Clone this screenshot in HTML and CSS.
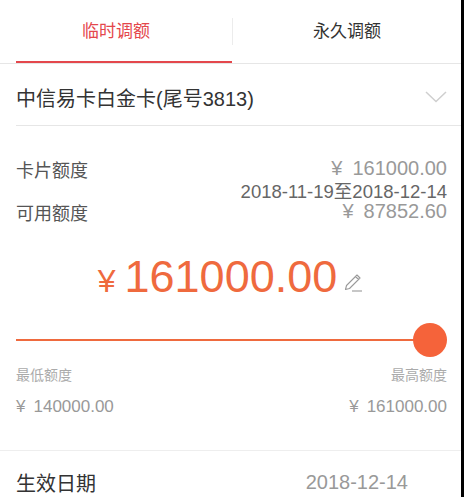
FILE: index.html
```html
<!DOCTYPE html>
<html lang="zh-CN">
<head>
    <meta charset="UTF-8">
    <meta name="viewport" content="width=device-width, initial-scale=1.0">
    <title>临时调额</title>
    <link rel="stylesheet" href="styles.css">
</head>
<body>

    <div class="page">
        <!-- Tabs -->
        <div class="tabs">
            <div class="tab active">临时调额</div>
            <div class="tab-sep"></div>
            <div class="tab">永久调额</div>
        </div>

        <!-- Card picker -->
        <div class="card-select">
            <span class="card-name">中信易卡白金卡(尾号3813)</span>
            <svg class="chevron" width="22" height="12" viewBox="0 0 22 12">
                <polyline points="1,1 11,10.5 21,1" fill="none" stroke="#cfcfcf" stroke-width="1.5"/>
            </svg>
        </div>

        <!-- Quota info -->
        <div class="quota">
            <div class="quota-label">卡片额度</div>
            <div class="quota-value"><span class="cur">¥</span>161000.00</div>
            <div class="quota-date">2018-11-19至2018-12-14</div>
            <div class="quota-label">可用额度</div>
            <div class="quota-value"><span class="cur">¥</span>87852.60</div>
        </div>

        <!-- Amount -->
        <div class="amount">
            <span class="yen">¥</span><span class="num">161000.00</span><svg class="edit" width="20" height="20" viewBox="0 0 20 20">
                <path d="M2.5 17.5 L3.5 13.5 L14 3 L17 6 L6.5 16.5 Z M12.5 4.5 L15.5 7.5" fill="none" stroke="#9a9a9a" stroke-width="1.1" stroke-linejoin="round"/>
                <line x1="9" y1="19" x2="19" y2="19" stroke="#9a9a9a" stroke-width="1.1"/>
            </svg>
        </div>

        <!-- Slider -->
        <div class="slider">
            <div class="track"></div>
            <div class="thumb"></div>
        </div>

        <div class="range">
            <div class="range-col">
                <div class="range-label">最低额度</div>
                <div class="range-value"><span class="cur">¥</span>140000.00</div>
            </div>
            <div class="range-col right">
                <div class="range-label">最高额度</div>
                <div class="range-value"><span class="cur">¥</span>161000.00</div>
            </div>
        </div>

        <!-- Effective date -->
        <div class="effective">
            <span class="effective-label">生效日期</span>
            <span class="effective-value">2018-12-14</span>
        </div>
    </div>

</body>
</html>
```

FILE: styles.css
```css
/* Common Styles */
html {
    background-color: #000;
}

body {
    margin: 0;
    font-family: 'Liberation Sans', 'Noto Sans CJK SC', sans-serif;
    color: #333;
}

.page {
    width: 461px;
    height: 497px;
    background-color: #fff;
    overflow: hidden;
}

.cur {
    margin-right: 10px;
}

/* Tabs */
.tabs {
    display: flex;
    align-items: center;
    height: 63px;
    border-bottom: 1px solid #e6e6e6;
}

.tab {
    position: relative;
    height: 63px;
    line-height: 63px;
    font-size: 17px;
    text-align: center;
    color: #333;
}

.tab:first-child {
    width: 232px;
}

.tab:last-child {
    flex: 1;
}

.tab.active {
    color: #e4474c;
}

.tab.active::after {
    content: "";
    position: absolute;
    left: 16px;
    right: 0;
    bottom: 0;
    height: 2px;
    background-color: #e4474c;
}

.tab-sep {
    width: 1px;
    height: 27px;
    background-color: #ececec;
}

/* Card picker */
.card-select {
    display: flex;
    align-items: center;
    justify-content: space-between;
    height: 56px;
    padding: 5px 14px 0 0;
    margin-left: 16px;
    border-bottom: 1px solid #e6e6e6;
}

.card-name {
    font-size: 20px;
    color: #333;
}

/* Quota */
.quota {
    display: grid;
    grid-template-columns: 1fr auto;
    padding: 32px 14px 0 16px;
}

.quota-label {
    font-size: 18px;
    line-height: 21px;
    padding-top: 3px;
    color: #555;
}

.quota-value {
    font-size: 20px;
    line-height: 21px;
    text-align: right;
    color: #999;
}

.quota-date {
    grid-column: 1 / 3;
    font-size: 18.5px;
    line-height: 19px;
    text-align: right;
    color: #666;
}

/* Amount */
.amount {
    margin-top: 29px;
    text-align: center;
    color: #ef6a3e;
    line-height: 45px;
}

.yen {
    font-size: 32px;
    margin-right: 9px;
}

.num {
    font-size: 45px;
}

.edit {
    margin-left: 6px;
}

/* Slider */
.slider {
    display: flex;
    align-items: center;
    height: 34px;
    margin-top: 14px;
    padding: 0 14px 0 16px;
}

.track {
    flex: 1;
    height: 2px;
    background-color: #ef6a3e;
}

.thumb {
    width: 34px;
    height: 34px;
    border-radius: 50%;
    background-color: #f5633a;
    margin-left: -2px;
}

.range {
    display: flex;
    justify-content: space-between;
    padding: 9px 14px 0 16px;
}

.range-col.right {
    text-align: right;
}

.range-label {
    font-size: 14px;
    line-height: 18px;
    color: #aaa;
}

.range-value {
    margin-top: 12px;
    font-size: 17px;
    line-height: 22px;
    color: #999;
}

.range-value .cur {
    margin-right: 8px;
}

/* Effective date */
.effective {
    display: flex;
    justify-content: space-between;
    align-items: center;
    margin-top: 32px;
    height: 62px;
    padding: 0 53px 0 16px;
    border-top: 1px solid #eeeeee;
}

.effective-label {
    font-size: 20px;
    color: #333;
}

.effective-value {
    font-size: 20px;
    color: #999;
}
```
